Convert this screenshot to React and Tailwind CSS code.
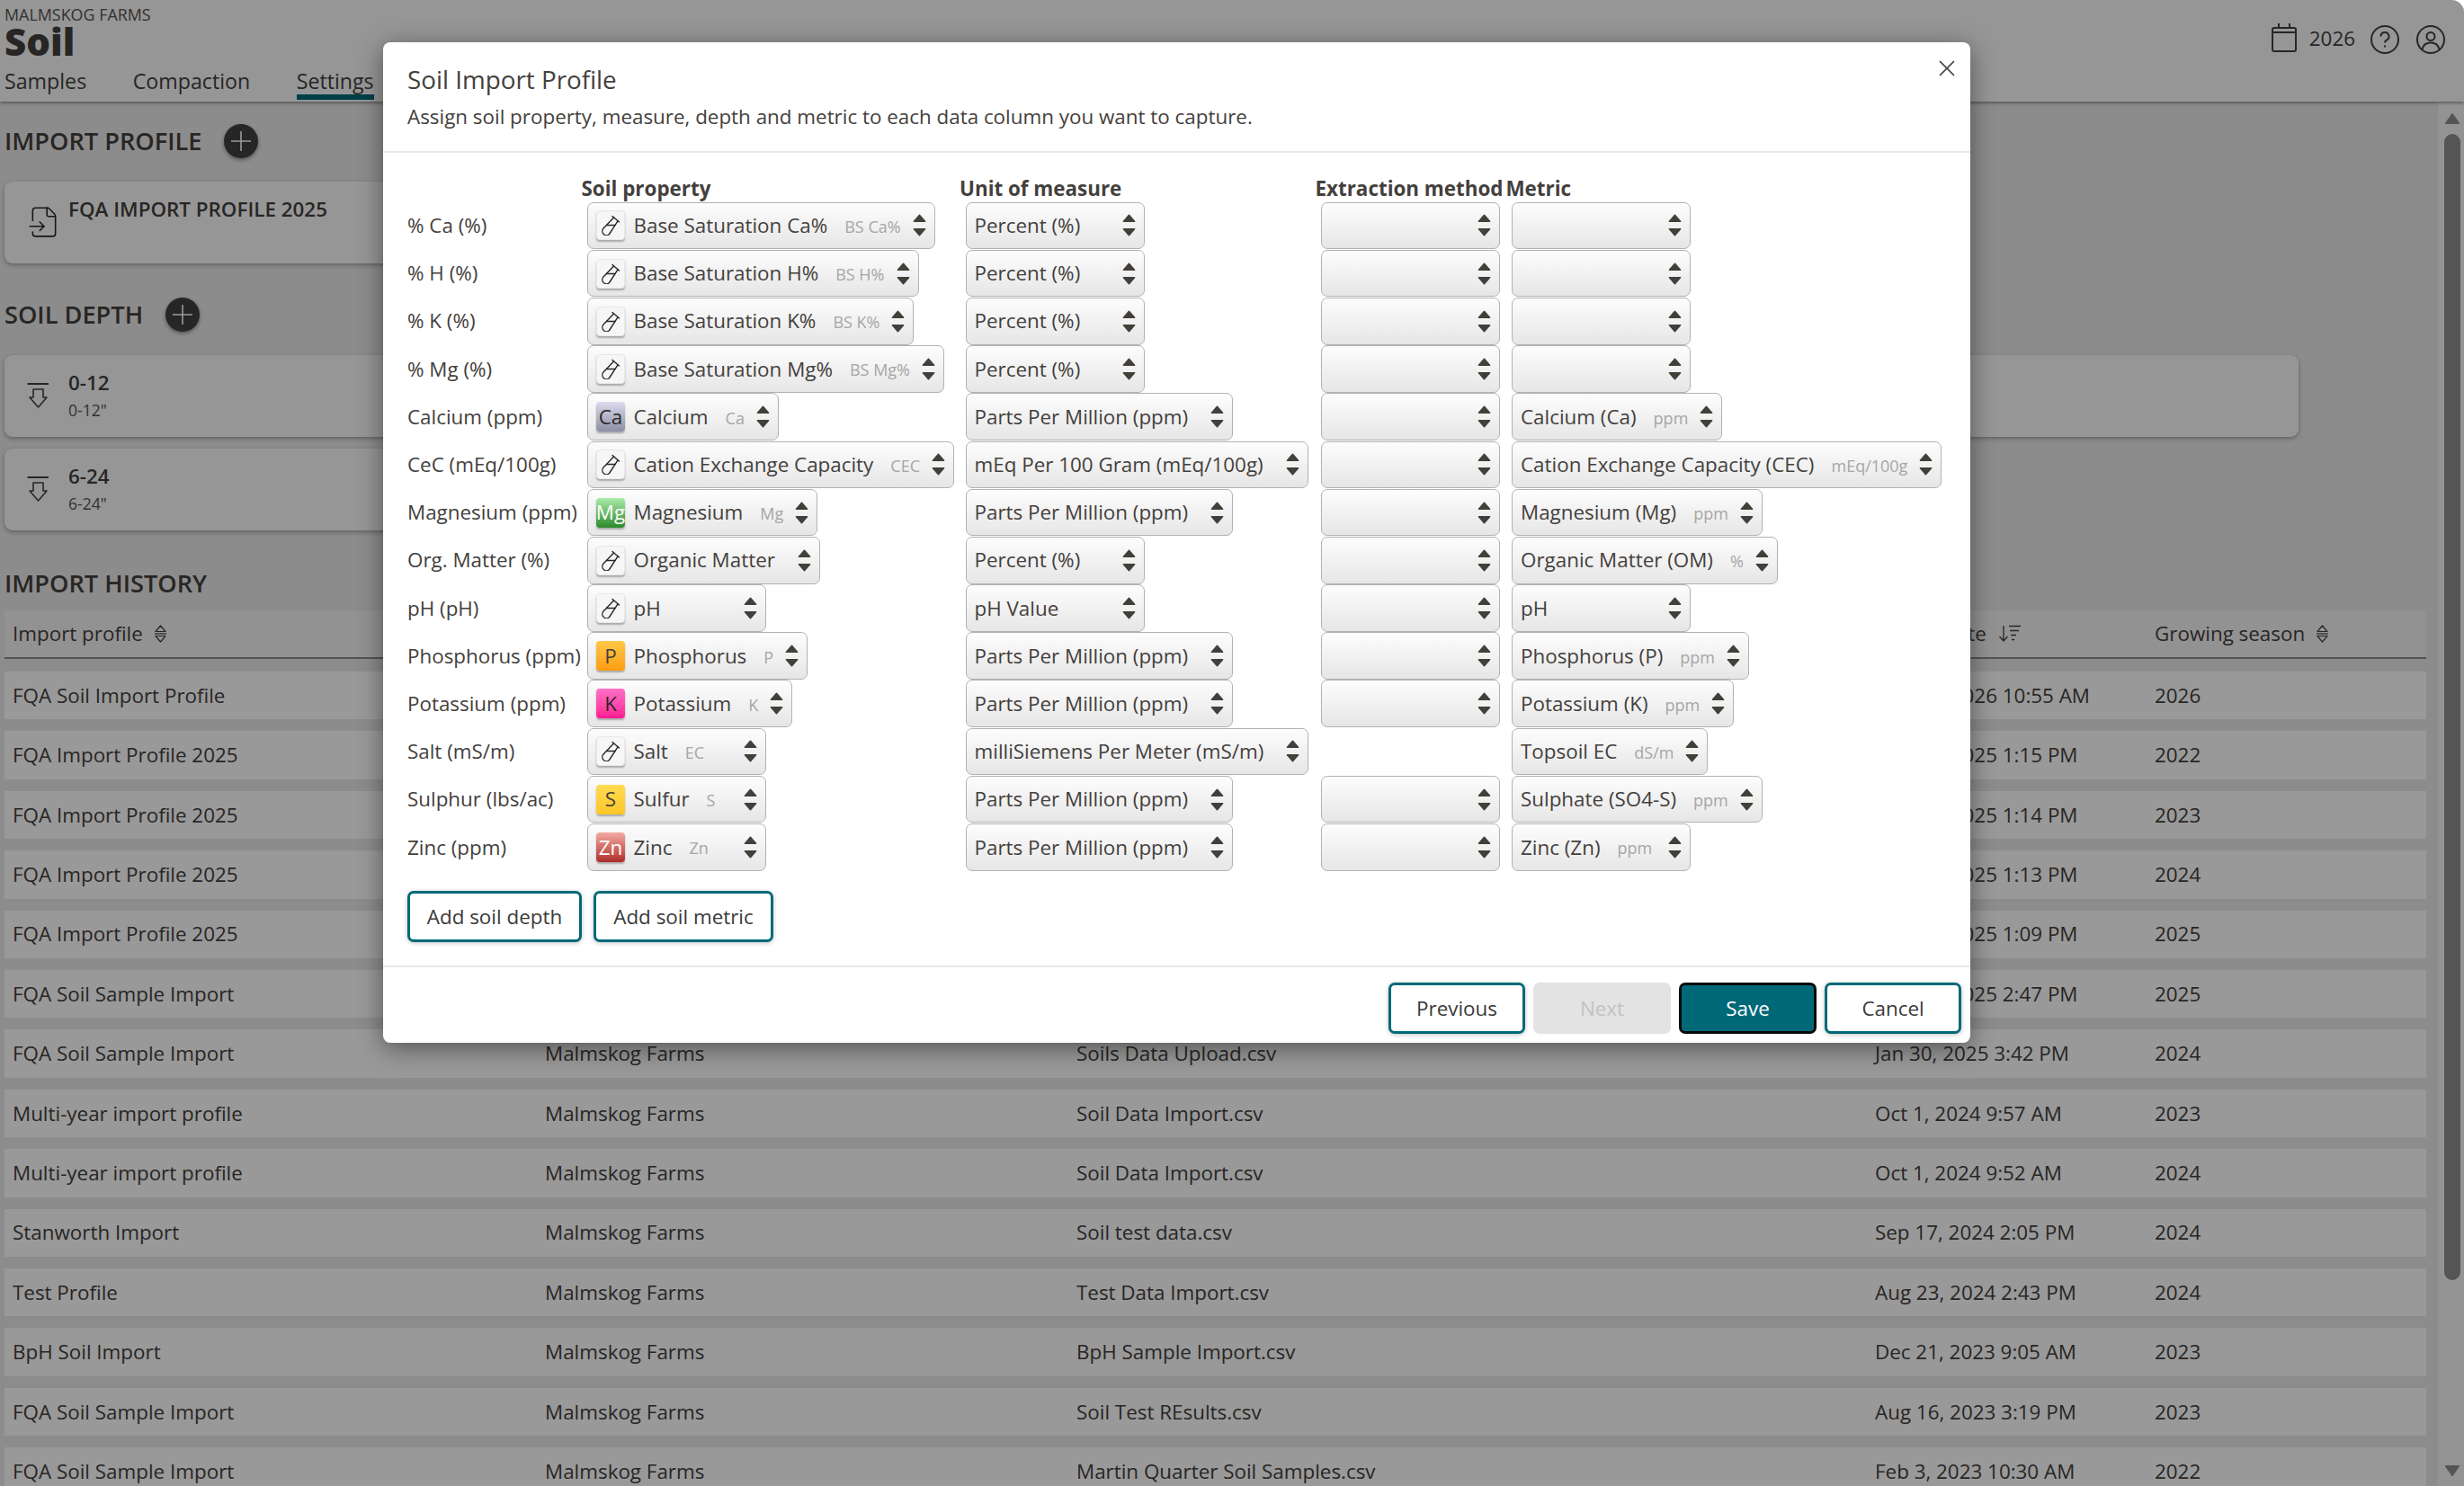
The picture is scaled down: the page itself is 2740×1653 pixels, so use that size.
import React from 'react';
import { FileInput, X } from 'lucide-react';

const rows = [
  ['% Ca (%)', { t: 'tube', l: 'Base Saturation Ca%', s: 'BS Ca%' }, 'Percent (%)', true, null],
  ['% H (%)', { t: 'tube', l: 'Base Saturation H%', s: 'BS H%' }, 'Percent (%)', true, null],
  ['% K (%)', { t: 'tube', l: 'Base Saturation K%', s: 'BS K%' }, 'Percent (%)', true, null],
  ['% Mg (%)', { t: 'tube', l: 'Base Saturation Mg%', s: 'BS Mg%' }, 'Percent (%)', true, null],
  ['Calcium (ppm)', { t: 'ca', b: 'Ca', l: 'Calcium', s: 'Ca' }, 'Parts Per Million (ppm)', true, { l: 'Calcium (Ca)', s: 'ppm' }],
  ['CeC (mEq/100g)', { t: 'tube', l: 'Cation Exchange Capacity', s: 'CEC' }, 'mEq Per 100 Gram (mEq/100g)', true, { l: 'Cation Exchange Capacity (CEC)', s: 'mEq/100g' }],
  ['Magnesium (ppm)', { t: 'mg', b: 'Mg', l: 'Magnesium', s: 'Mg' }, 'Parts Per Million (ppm)', true, { l: 'Magnesium (Mg)', s: 'ppm' }],
  ['Org. Matter (%)', { t: 'tube', l: 'Organic Matter' }, 'Percent (%)', true, { l: 'Organic Matter (OM)', s: '%' }],
  ['pH (pH)', { t: 'tube', l: 'pH' }, 'pH Value', true, { l: 'pH' }],
  ['Phosphorus (ppm)', { t: 'p', b: 'P', l: 'Phosphorus', s: 'P' }, 'Parts Per Million (ppm)', true, { l: 'Phosphorus (P)', s: 'ppm' }],
  ['Potassium (ppm)', { t: 'k', b: 'K', l: 'Potassium', s: 'K' }, 'Parts Per Million (ppm)', true, { l: 'Potassium (K)', s: 'ppm' }],
  ['Salt (mS/m)', { t: 'tube', l: 'Salt', s: 'EC' }, 'milliSiemens Per Meter (mS/m)', false, { l: 'Topsoil EC', s: 'dS/m' }],
  ['Sulphur (lbs/ac)', { t: 's', b: 'S', l: 'Sulfur', s: 'S' }, 'Parts Per Million (ppm)', true, { l: 'Sulphate (SO4-S)', s: 'ppm' }],
  ['Zinc (ppm)', { t: 'zn', b: 'Zn', l: 'Zinc', s: 'Zn' }, 'Parts Per Million (ppm)', true, { l: 'Zinc (Zn)', s: 'ppm' }],
];

const history = [
  ['FQA Soil Import Profile', 'Soil Import Data.csv', 'Mar 12, 2026 10:55 AM', '2026'],
  ['FQA Import Profile 2025', 'FQA Soil Data.csv', 'Mar 14, 2025 1:15 PM', '2022'],
  ['FQA Import Profile 2025', 'FQA Soil Data.csv', 'Mar 14, 2025 1:14 PM', '2023'],
  ['FQA Import Profile 2025', 'FQA Soil Data.csv', 'Mar 14, 2025 1:13 PM', '2024'],
  ['FQA Import Profile 2025', 'FQA Soil Data.csv', 'Mar 14, 2025 1:09 PM', '2025'],
  ['FQA Soil Sample Import', 'Soils Data Upload.csv', 'Mar 30, 2025 2:47 PM', '2025'],
  ['FQA Soil Sample Import', 'Soils Data Upload.csv', 'Jan 30, 2025 3:42 PM', '2024'],
  ['Multi-year import profile', 'Soil Data Import.csv', 'Oct 1, 2024 9:57 AM', '2023'],
  ['Multi-year import profile', 'Soil Data Import.csv', 'Oct 1, 2024 9:52 AM', '2024'],
  ['Stanworth Import', 'Soil test data.csv', 'Sep 17, 2024 2:05 PM', '2024'],
  ['Test Profile', 'Test Data Import.csv', 'Aug 23, 2024 2:43 PM', '2024'],
  ['BpH Soil Import', 'BpH Sample Import.csv', 'Dec 21, 2023 9:05 AM', '2023'],
  ['FQA Soil Sample Import', 'Soil Test REsults.csv', 'Aug 16, 2023 3:19 PM', '2023'],
  ['FQA Soil Sample Import', 'Martin Quarter Soil Samples.csv', 'Feb 3, 2023 10:30 AM', '2022'],
];

function Chevrons() {
  return (
    <svg width="15" height="25" viewBox="0 0 15 25" className="shrink-0 text-[#433f3a]" fill="currentColor" stroke="currentColor" strokeWidth="1.5" strokeLinejoin="round">
      <path d="M7.5 1.2 13.6 8.2H1.4Z" />
      <path d="M1.4 16.8H13.6L7.5 23.8Z" />
    </svg>
  );
}

function TubeIcon() {
  return (
    <svg width="22" height="23" viewBox="0 0 22 23" fill="none" stroke="#2b2724" strokeWidth="1.4" strokeLinecap="round" strokeLinejoin="round">
      <path d="M13 1.5 20.5 8" />
      <path d="M14.5 3 3 15a4.6 4.6 0 0 0 6.5 6.5L19 6.8" />
      <path d="M6.5 11.5H16" />
    </svg>
  );
}

function Badge({ t, b }) {
  if (t === 'tube') {
    return (
      <span className="flex h-[33px] w-[32px] shrink-0 items-center justify-center rounded-[4px] border border-[#e8e8e8] bg-[#f6f6f6] shadow-[0_2px_2px_rgba(0,0,0,0.28)]">
        <TubeIcon />
      </span>
    );
  }
  const styles = {
    ca: 'from-[#dcdcec] to-[#8e8ea6] text-[#2b2724]',
    mg: 'from-[#a8eca8] to-[#2b8a2b] text-white',
    p: 'from-[#ffc846] to-[#ff9d0a] text-[#44403c]',
    k: 'from-[#ff6ec7] to-[#ff1493] text-[#2b2724]',
    s: 'from-[#ffdc50] to-[#ffc526] text-[#44403c]',
    zn: 'from-[#f2aaa2] to-[#ad2a2a] text-white',
  };
  return (
    <span className={`flex h-[33px] w-[32px] shrink-0 items-center justify-center overflow-visible rounded-[4px] bg-linear-to-b shadow-[0_2px_2px_rgba(0,0,0,0.28)] ${styles[t]}`}>
      {b}
    </span>
  );
}

function Select({ data }) {
  const hasIcon = data && data.t;
  return (
    <div className="ml-[6.5px] inline-flex h-[52.6px] w-fit min-w-[199px] items-center rounded-[7px] border border-[#b2b2b2] bg-linear-to-b from-[#fdfdfd] to-[#e6e6e6] pr-[9px] pl-[9px] text-[22.4px] whitespace-nowrap text-[#44403c]">
      {hasIcon && <span className="mr-[9.5px]"><Badge t={data.t} b={data.b} /></span>}
      {data && <span>{data.l}</span>}
      {data && data.s && <span className="ml-[19px] pt-[3px] text-[18px] text-[#a6a6a6]">{data.s}</span>}
      <span className={data && data.s ? 'ml-auto pl-[13px]' : 'ml-auto pl-[25px]'}>
        <Chevrons />
      </span>
    </div>
  );
}

function TealButton({ children, w }) {
  return (
    <button className={`h-[57px] rounded-[7px] border-[3px] border-[#006978] bg-white text-[22.4px] text-[#3a3a3a] shadow-[0_1px_5px_rgba(0,0,0,0.25)] ${w}`}>
      {children}
    </button>
  );
}

function PlusCircle() {
  return (
    <span className="flex h-[38px] w-[38px] items-center justify-center rounded-full bg-[#404040] shadow-[0_2px_4px_rgba(0,0,0,0.4)]">
      <svg width="24" height="24" viewBox="0 0 24 24" stroke="#fff" strokeWidth="1.6"><path d="M12 1V23M1 12H23" /></svg>
    </span>
  );
}

function DepthIcon() {
  return (
    <svg width="24" height="30" viewBox="0 0 24 30" fill="none" stroke="currentColor" strokeWidth="1.6" strokeLinejoin="round" className="shrink-0 text-[#44403c]">
      <path d="M0.5 2H24" strokeWidth="2" />
      <path d="M7 8H18V17H22L12.5 28L3 17H7Z" />
    </svg>
  );
}

function DepthCard({ title, sub, w }) {
  return (
    <div className={`flex h-[91px] items-start rounded-[9px] bg-[#fbfbfb] pt-[30px] pl-[25px] shadow-[0_2px_5px_rgba(0,0,0,0.3)] ${w}`}>
      <DepthIcon />
      <div className="-mt-[14px] ml-[22px]">
        <div className="text-[22.4px] leading-[30px] font-semibold text-[#44403c]">{title}</div>
        <div className="mt-[2px] text-[17.6px] leading-[26px] text-[#57534e]">{sub}</div>
      </div>
    </div>
  );
}

function SortIcon() {
  return (
    <svg width="15" height="20" viewBox="0 0 14 20" fill="none" stroke="currentColor" strokeWidth="1.2" strokeLinejoin="round" className="ml-[12px] shrink-0 text-[#44403c]">
      <path d="M7 1 12.5 7.5H1.5Z" />
      <path d="M0.5 10H13.5" />
      <path d="M1.5 12.5H12.5L7 19Z" />
    </svg>
  );
}

function SortDescIcon() {
  return (
    <svg width="25" height="19" viewBox="0 0 25 19" fill="none" stroke="currentColor" strokeWidth="1.3" className="ml-[13px] shrink-0 text-[#44403c]">
      <path d="M6 1V18M1.5 13 6 18 10.5 13" />
      <path d="M12 1.5H25M13 6.5H23M14 11.5H20M15 16.5H18" />
    </svg>
  );
}

export default function App() {
  return (
    <div className="h-[1653px] w-[2740px] overflow-hidden bg-white font-['Open_Sans',sans-serif]">
      <div className="relative h-full w-full overflow-hidden rounded-tr-[14px] bg-[#e9e9e9] text-[#44403c]">
        <header className="relative z-10 flex h-[113px] justify-between bg-[#fafafa] pl-[5px] shadow-[0_2px_3px_rgba(0,0,0,0.35)]">
          <div>
            <div className="pt-[4px] text-[17.9px] leading-[24px] text-[#57534e]">MALMSKOG FARMS</div>
            <div className="-mt-[3px] text-[42px] leading-[42px] font-extrabold">Soil</div>
            <nav className="mt-[2px] flex gap-[51.5px] text-[23.2px] leading-[42px] font-medium">
              <span>Samples</span>
              <span>Compaction</span>
              <span className="h-[42px] border-b-[6px] border-[#006978]">Settings</span>
            </nav>
          </div>
          <div className="flex items-start pt-[26px] pr-[21px]">
            <svg width="28" height="32" viewBox="0 0 28 32" fill="none" stroke="#44403c" strokeWidth="2">
              <rect x="1" y="5" width="26" height="26" rx="2" />
              <path d="M1 10H27M8 0V5M20 0V5" />
            </svg>
            <span className="ml-[14px] text-[22.4px] leading-[34px]">2026</span>
            <svg width="32" height="32" viewBox="0 0 32 32" fill="none" stroke="#44403c" strokeWidth="2" className="mt-[2px] ml-[17px]">
              <circle cx="16" cy="16" r="15" />
              <path d="M11.5 12.5a4.5 4.5 0 1 1 6.5 4c-1.5.8-2 1.6-2 3" />
              <path d="M16 22.5V24.5" />
            </svg>
            <svg width="32" height="32" viewBox="0 0 32 32" fill="none" stroke="#44403c" strokeWidth="2" className="mt-[2px] ml-[19px]">
              <circle cx="16" cy="16" r="15" />
              <circle cx="16" cy="12.5" r="4.5" />
              <path d="M6.5 27c1-5 5-7.5 9.5-7.5s8.5 2.5 9.5 7.5" />
            </svg>
          </div>
        </header>

        <div className="flex h-[1540px]">
          <main className="min-w-0 flex-1 pr-[13px] pl-[5px]">
            <h2 className="mt-[25px] flex h-[38px] items-center gap-[25px] text-[27.2px] font-semibold">IMPORT PROFILE <PlusCircle /></h2>
            <div className="mt-[26px] flex h-[91px] w-[1275px] items-start rounded-[9px] bg-[#fbfbfb] pt-[26px] pl-[25px] shadow-[0_2px_5px_rgba(0,0,0,0.3)]">
              <FileInput size={38} strokeWidth={1} className="shrink-0 text-[#2b2724]" />
              <span className="-mt-[10px] ml-[8px] text-[22.4px] leading-[30px] font-semibold">FQA IMPORT PROFILE 2025</span>
            </div>

            <h2 className="mt-[38px] flex h-[38px] items-center gap-[25px] text-[27.2px] font-semibold">SOIL DEPTH <PlusCircle /></h2>
            <div className="mt-[26px] flex flex-col gap-[13px]">
              <DepthCard title="0-12" sub={'0-12"'} w="w-[2551px]" />
              <DepthCard title="6-24" sub={'6-24"'} w="w-[1275px]" />
            </div>

            <h2 className="mt-[40px] h-[38px] text-[27.2px] leading-[38px] font-semibold">IMPORT HISTORY</h2>
            <div className="mt-[11px] grid h-[54px] grid-cols-[592px_591px_888px_311px_1fr] items-center border-b-[2px] border-[#8a8a8a] bg-[#f4f4f4] pl-[9px] text-[22.4px]">
              <span className="flex items-center">Import profile <SortIcon /></span>
              <span>Grower</span>
              <span>File name</span>
              <span className="flex items-center">Import date <SortDescIcon /></span>
              <span className="flex items-center">Growing season <SortIcon /></span>
            </div>
            <div className="mt-[14px] flex flex-col gap-[13px]">
              {history.map((r, i) => (
                <div key={i} className="grid h-[53.4px] shrink-0 grid-cols-[592px_591px_888px_311px_1fr] items-center bg-white pl-[9px] text-[22.4px]">
                  <span>{r[0]}</span>
                  <span>Malmskog Farms</span>
                  <span>{r[1]}</span>
                  <span>{r[2]}</span>
                  <span>{r[3]}</span>
                </div>
              ))}
            </div>
          </main>
          <div className="relative flex w-[29px] shrink-0 flex-col items-center bg-[#f6f6f6]">
            <svg width="16" height="12" viewBox="0 0 16 12" className="mt-[13px] ml-[2px]" fill="#8e8e8e" stroke="#8e8e8e" strokeWidth="2" strokeLinejoin="round"><path d="M8 1 15 11H1Z" /></svg>
            <div className="mt-[11px] ml-[2px] h-[1275px] w-[18px] rounded-full bg-[#8e8e8e]" />
            <svg width="16" height="12" viewBox="0 0 16 12" className="mt-[206px] ml-[2px]" fill="#8e8e8e" stroke="#8e8e8e" strokeWidth="2" strokeLinejoin="round"><path d="M1 1H15L8 11Z" /></svg>
          </div>
        </div>

        <div className="absolute inset-0 z-20 bg-black/40" />

        <div className="absolute top-[47px] left-[426px] z-30 flex h-[1113px] w-[1765px] flex-col rounded-[8px] bg-white text-[#44403c] shadow-[0_6px_28px_rgba(0,0,0,0.45)]">
          <button className="absolute top-[14px] right-[11px] text-[#44403c]"><X size={30} strokeWidth={1.4} /></button>
          <div className="h-[123px] shrink-0 border-b-[2px] border-[#e8e8e8] pt-[23px] pl-[27px]">
            <h1 className="text-[27.8px] leading-[36px] font-medium">Soil Import Profile</h1>
            <p className="mt-[9px] text-[22.4px] leading-[30px]">Assign soil property, measure, depth and metric to each data column you want to capture.</p>
          </div>
          <div className="flex-1 pt-[27px] pl-[27px]">
            <div className="grid h-[27.3px] grid-cols-[193.5px_420.5px_395.5px_212px_1fr] text-[22.4px] leading-[26px] font-bold whitespace-nowrap">
              <span />
              <span>Soil property</span>
              <span>Unit of measure</span>
              <span>Extraction method</span>
              <span>Metric</span>
            </div>
            {rows.map((r) => (
              <div key={r[0]} className="grid h-[53.2px] grid-cols-[193.5px_420.5px_395.5px_212px_1fr] items-center text-[22.4px] whitespace-nowrap">
                <span>{r[0]}</span>
                <Select data={r[1]} />
                <Select data={{ l: r[2] }} />
                {r[3] ? <Select /> : <span />}
                <Select data={r[4]} />
              </div>
            ))}
            <div className="mt-[22.5px] flex gap-[13px]">
              <TealButton w="w-[194px]">Add soil depth</TealButton>
              <TealButton w="w-[200px]">Add soil metric</TealButton>
            </div>
          </div>
          <div className="flex h-[86px] shrink-0 justify-end gap-[9px] border-t-[2px] border-[#e8e8e8] pt-[17px] pr-[10px]">
            <TealButton w="w-[152px]">Previous</TealButton>
            <button className="h-[57px] w-[153px] rounded-[7px] bg-[#e3e3e3] text-[22.4px] text-[#c2c2c2]">Next</button>
            <button className="h-[57px] w-[153px] rounded-[7px] border-[3px] border-[#0a0a0a] bg-[#006978] text-[22.4px] font-medium text-white">Save</button>
            <TealButton w="w-[152px]">Cancel</TealButton>
          </div>
        </div>
      </div>
    </div>
  );
}
